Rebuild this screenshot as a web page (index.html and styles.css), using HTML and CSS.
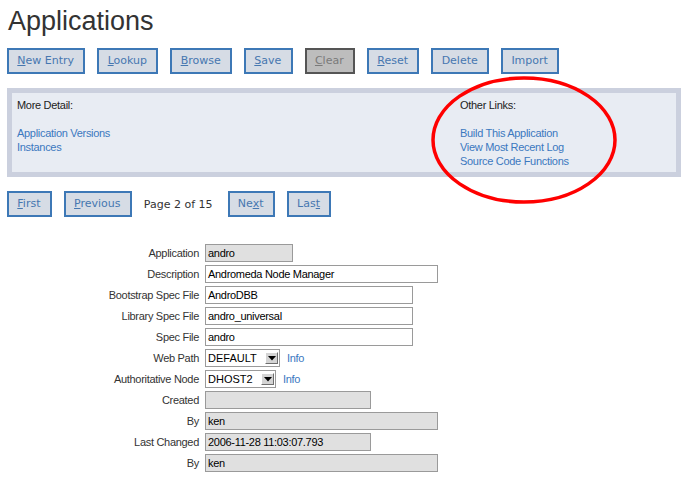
FILE: index.html
```html
<!DOCTYPE html>
<html>
<head>
<meta charset="utf-8">
<link rel="stylesheet" href="styles.css">
</head>
<body>
<div class="page">
  <h1 class="title">Applications</h1>
  <div class="toolbar">
    <span class="btn"><u>N</u>ew Entry</span>
    <span class="btn"><u>L</u>ookup</span>
    <span class="btn"><u>B</u>rowse</span>
    <span class="btn"><u>S</u>ave</span>
    <span class="btn btn-off"><u>C</u>lear</span>
    <span class="btn"><u>R</u>eset</span>
    <span class="btn">Delete</span>
    <span class="btn">Import</span>
  </div>

  <div class="panel">
    <div class="col">
      <div class="line">More Detail:</div>
      <div class="line"></div>
      <a class="line link">Application Versions</a>
      <a class="line link">Instances</a>
    </div>
    <div class="col">
      <div class="line">Other Links:</div>
      <div class="line"></div>
      <a class="line link">Build This Application</a>
      <a class="line link">View Most Recent Log</a>
      <a class="line link">Source Code Functions</a>
    </div>
    <svg class="circle" width="200" height="136" viewBox="0 0 200 136">
      <ellipse cx="100" cy="68" rx="91" ry="62" fill="none" stroke="#ff0000" stroke-width="3.5"/>
    </svg>
  </div>

  <div class="pager">
    <span class="btn"><u>F</u>irst</span>
    <span class="btn"><u>P</u>revious</span>
    <span class="pageinfo">Page 2 of 15</span>
    <span class="btn">Ne<u>x</u>t</span>
    <span class="btn">Las<u>t</u></span>
  </div>

  <div class="form">
    <label class="lbl">Application</label>
    <div class="fld"><span class="inp ro w88">andro</span></div>

    <label class="lbl">Description</label>
    <div class="fld"><span class="inp w233">Andromeda Node Manager</span></div>

    <label class="lbl">Bootstrap Spec File</label>
    <div class="fld"><span class="inp w208">AndroDBB</span></div>

    <label class="lbl">Library Spec File</label>
    <div class="fld"><span class="inp w208">andro_universal</span></div>

    <label class="lbl">Spec File</label>
    <div class="fld"><span class="inp w208">andro</span></div>

    <label class="lbl">Web Path</label>
    <div class="fld">
      <span class="sel w75"><span class="seltext">DEFAULT</span><span class="arrow"><svg width="8" height="5" viewBox="0 0 8 5"><path d="M0 0H8L4 4.5Z" fill="#000"/></svg></span></span>
      <a class="link info">Info</a>
    </div>

    <label class="lbl">Authoritative Node</label>
    <div class="fld">
      <span class="sel w71"><span class="seltext">DHOST2</span><span class="arrow"><svg width="8" height="5" viewBox="0 0 8 5"><path d="M0 0H8L4 4.5Z" fill="#000"/></svg></span></span>
      <a class="link info">Info</a>
    </div>

    <label class="lbl">Created</label>
    <div class="fld"><span class="inp ro w166"></span></div>

    <label class="lbl">By</label>
    <div class="fld"><span class="inp ro w233">ken</span></div>

    <label class="lbl">Last Changed</label>
    <div class="fld"><span class="inp ro w166">2006-11-28 11:03:07.793</span></div>

    <label class="lbl">By</label>
    <div class="fld"><span class="inp ro w233">ken</span></div>
  </div>
</div>
</body>
</html>
```

FILE: styles.css
```css
html, body {
  margin: 0;
  padding: 0;
  background: #ffffff;
}
.page {
  padding: 0 8px 0 7px;
  font-family: "Liberation Sans", Arial, sans-serif;
  color: #333333;
}
.title {
  margin: 5px 0 0 1px;
  font-family: "Liberation Sans", Arial, sans-serif;
  font-weight: normal;
  font-size: 27px;
  line-height: 32px;
  color: #333333;
}
.toolbar {
  display: flex;
  gap: 12px;
  margin-top: 11px;
}
.btn {
  box-sizing: border-box;
  display: inline-block;
  height: 26px;
  line-height: 22px;
  padding: 0 9.3px 0 8.3px;
  border: 2px solid #3d78b6;
  background: #d6dce5;
  color: #4677b0;
  font-family: "DejaVu Sans", sans-serif;
  font-size: 11px;
  white-space: nowrap;
}
.btn u {
  text-decoration: underline;
}
.btn-off {
  border-color: #555555;
  background: #bdbdbd;
  color: #7a7a7a;
}
.panel {
  position: relative;
  margin-top: 14px;
  border: 5px solid #cbd0de;
  background: #e8ecf3;
  padding: 5px 5px 4px 5px;
  display: grid;
  grid-template-columns: 443px 1fr;
  font-size: 11px;
  letter-spacing: -0.3px;
}
.col {
  display: flex;
  flex-direction: column;
}
.line {
  display: block;
  height: 14px;
  line-height: 14px;
  color: #222222;
}
.link {
  color: #3b78bf;
  text-decoration: none;
}
.line.link {
  color: #3b78bf;
}
.circle {
  position: absolute;
  left: 412px;
  top: -21px;
}
.pager {
  display: flex;
  align-items: center;
  gap: 12px;
  margin-top: 14px;
}
.pageinfo {
  font-family: "DejaVu Sans", sans-serif;
  font-size: 11px;
  color: #333333;
  margin: 0 3px 0 0;
}
.form {
  display: grid;
  grid-template-columns: 192px auto;
  column-gap: 6px;
  row-gap: 3px;
  margin-top: 27px;
  font-size: 11px;
  letter-spacing: -0.3px;
}
.lbl {
  text-align: right;
  align-self: center;
  color: #333333;
  white-space: nowrap;
}
.fld {
  display: flex;
  align-items: center;
  height: 18px;
}
.inp {
  box-sizing: border-box;
  display: block;
  height: 18px;
  line-height: 16px;
  border: 1px solid #9a9a9a;
  background: #ffffff;
  color: #000000;
  padding: 0 2px;
  font-size: 11px;
  white-space: nowrap;
  overflow: hidden;
}
.inp.ro {
  background: #e0e0e0;
}
.w88 { width: 88px; }
.w166 { width: 166px; }
.w208 { width: 208px; }
.w233 { width: 233px; }
.w75 { width: 75px; }
.w71 { width: 71px; }
.sel {
  box-sizing: border-box;
  display: flex;
  align-items: center;
  justify-content: space-between;
  height: 18px;
  border: 1px solid #9a9a9a;
  background: #ffffff;
  color: #000000;
  padding: 0 1px 0 2px;
  font-size: 11px;
  letter-spacing: 0;
}
.arrow {
  box-sizing: border-box;
  display: flex;
  align-items: center;
  justify-content: center;
  width: 13px;
  height: 12px;
  background: #d4d4d4;
  border-top: 1px solid #ffffff;
  border-left: 1px solid #ffffff;
  border-right: 1px solid #6e6e6e;
  border-bottom: 1px solid #6e6e6e;
}
.info {
  margin-left: 7px;
  color: #3b78bf;
}
```
